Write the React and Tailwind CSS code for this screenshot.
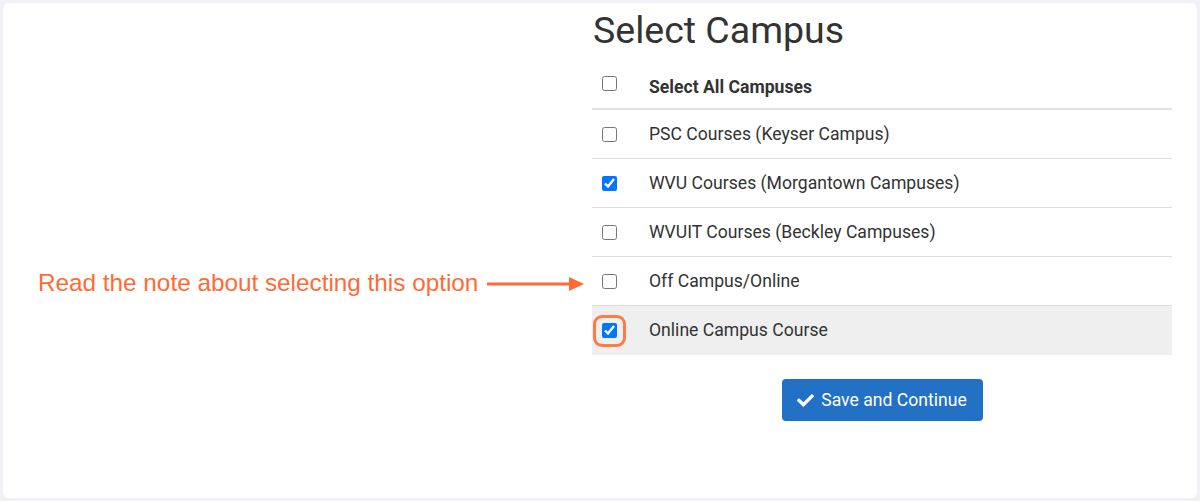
import { useState } from "react";

const campuses = [
  { name: "PSC Courses (Keyser Campus)", checked: false },
  { name: "WVU Courses (Morgantown Campuses)", checked: true },
  { name: "WVUIT Courses (Beckley Campuses)", checked: false },
  { name: "Off Campus/Online", checked: false },
  { name: "Online Campus Course", checked: true, highlight: true },
];

const App = () => {
  const [items, setItems] = useState(campuses);

  const toggle = (i) =>
    setItems((prev) =>
      prev.map((c, idx) => (idx === i ? { ...c, checked: !c.checked } : c))
    );

  return (
    <div className="w-[1200px] h-[501px] bg-[#f2f2f6] p-[3px]">
      <div className="relative w-full h-full bg-white rounded-[6px] font-['Roboto',sans-serif] text-[#333]">
        {/* Annotation */}
        <div className="absolute left-[35px] top-[262px] flex items-center">
          <span className="font-['Liberation_Sans',Arial,sans-serif] text-[24.3px] text-[#ff6b35]">
            Read the note about selecting this option
          </span>
          <svg width="100" height="14" viewBox="0 0 100 14" className="ml-[9px] mt-[2px]">
            <line x1="0" y1="7" x2="84" y2="7" stroke="#ff6b35" strokeWidth="3" />
            <polygon points="82,0 97,7 82,14" fill="#ff6b35" />
          </svg>
        </div>

        <div className="ml-[589px] w-[580px] pt-[2px]">
          <h1 className="text-[37.5px] leading-[50px] pl-[1px] text-[#333]">Select Campus</h1>

          <div className="mt-[6px]">
            <div className="flex items-center h-[49px] border-b-2 border-[#e2e2e2] pb-[1px]">
              <div className="w-[57px] pl-[10px] flex items-center -mt-[2px]">
                <input type="checkbox" className="w-[15px] h-[15px] m-0" />
              </div>
              <span className="text-[17.6px] font-bold pt-[6px]">Select All Campuses</span>
            </div>

            {items.map((c, i) => (
              <div
                key={i}
                className={`flex items-center h-[49px] ${
                  i < items.length - 1 ? "border-b border-[#dedede]" : ""
                } ${c.highlight ? "bg-[#efefef] h-[48px]" : ""}`}
              >
                <div className="w-[57px] pl-[10px] flex items-center">
                  {c.highlight ? (
                    <div className="-ml-[9px] w-[33px] h-[32px] rounded-[9px] border-[3px] border-[#ff7a45] flex items-center justify-center">
                      <input
                        type="checkbox"
                        checked={c.checked}
                        onChange={() => toggle(i)}
                        className="w-[15px] h-[15px] m-0"
                      />
                    </div>
                  ) : (
                    <input
                      type="checkbox"
                      checked={c.checked}
                      onChange={() => toggle(i)}
                      className="w-[15px] h-[15px] m-0"
                    />
                  )}
                </div>
                <span className="text-[17.6px]">{c.name}</span>
              </div>
            ))}
          </div>

          <div className="flex justify-center mt-[24px]">
            <button className="flex items-center gap-[7px] h-[42px] w-[201px] justify-center bg-[#2271c4] text-white text-[17.6px] rounded-[4px]">
              <svg width="17" height="14" viewBox="0 0 512 410" fill="white">
                <path d="M173.9 402.6L7.5 236.2c-10-10-10-26.2 0-36.2l36.2-36.2c10-10 26.2-10 36.2 0L192 275.9 432.1 35.8c10-10 26.2-10 36.2 0l36.2 36.2c10 10 10 26.2 0 36.2L210.1 402.6c-10 10-26.2 10-36.2 0z" />
              </svg>
              Save and Continue
            </button>
          </div>
        </div>
      </div>
    </div>
  );
};

export default App;
